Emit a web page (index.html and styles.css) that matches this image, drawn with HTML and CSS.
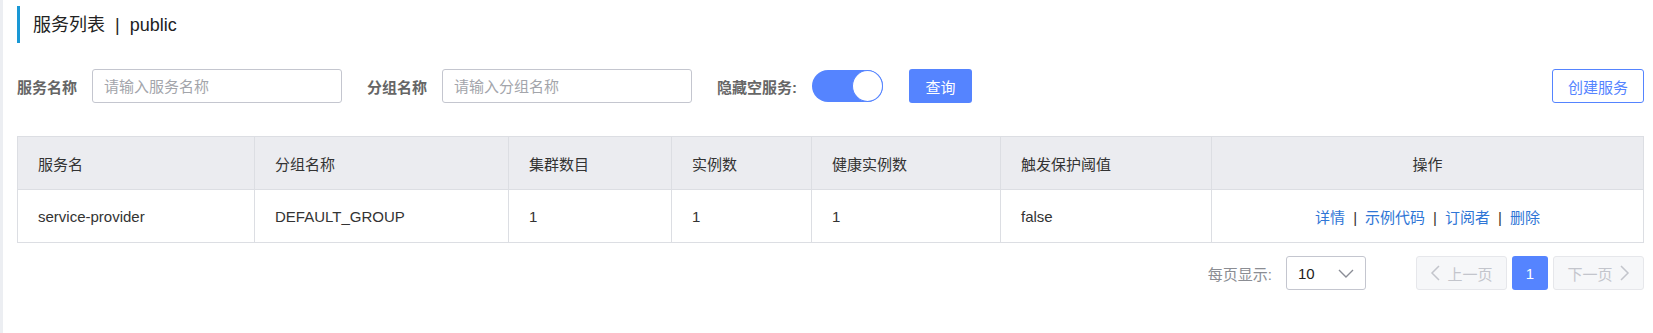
FILE: index.html
```html
<!DOCTYPE html>
<html lang="zh-CN">
<head>
<meta charset="utf-8">
<title>服务列表</title>
<link rel="stylesheet" href="styles.css">
</head>
<body>
<div class="layout">
  <div class="side-edge"></div>
  <main class="main">
    <div class="page-title">
      <span class="title-bar"></span>
      <span class="title-text">服务列表<span class="title-sep">|</span>public</span>
    </div>

    <div class="filter-row">
      <div class="filter-left">
        <div class="form-item">
          <label class="form-label">服务名称</label>
          <input class="text-input" type="text" placeholder="请输入服务名称">
        </div>
        <div class="form-item">
          <label class="form-label">分组名称</label>
          <input class="text-input" type="text" placeholder="请输入分组名称">
        </div>
        <div class="form-item">
          <label class="form-label">隐藏空服务:</label>
          <span class="switch"><span class="switch-knob"></span></span>
        </div>
        <button class="btn btn-primary" type="button">查询</button>
      </div>
      <button class="btn btn-outline" type="button">创建服务</button>
    </div>

    <table class="data-table">
      <colgroup>
        <col class="c1"><col class="c2"><col class="c3"><col class="c4"><col class="c5"><col class="c6"><col class="c7">
      </colgroup>
      <thead>
        <tr>
          <th>服务名</th>
          <th>分组名称</th>
          <th>集群数目</th>
          <th>实例数</th>
          <th>健康实例数</th>
          <th>触发保护阈值</th>
          <th class="center">操作</th>
        </tr>
      </thead>
      <tbody>
        <tr>
          <td>service-provider</td>
          <td>DEFAULT_GROUP</td>
          <td>1</td>
          <td>1</td>
          <td>1</td>
          <td>false</td>
          <td class="center">
            <a class="link">详情</a><span class="sep">|</span><a class="link">示例代码</a><span class="sep">|</span><a class="link">订阅者</a><span class="sep">|</span><a class="link">删除</a>
          </td>
        </tr>
      </tbody>
    </table>

    <div class="pager-row">
      <span class="pager-label">每页显示:</span>
      <div class="select">
        <span class="select-value">10</span>
        <svg class="chev" width="16" height="9" viewBox="0 0 16 9"><path d="M1 1 L8 8 L15 1" fill="none" stroke="#8a8d96" stroke-width="1.4"/></svg>
      </div>
      <div class="pager">
        <button class="pg-btn pg-disabled" type="button"><svg width="10" height="16" viewBox="0 0 10 16"><path d="M9 1 L2 8 L9 15" fill="none" stroke="#c3c5cc" stroke-width="1.5"/></svg>上一页</button>
        <button class="pg-num" type="button">1</button>
        <button class="pg-btn pg-disabled" type="button">下一页<svg width="10" height="16" viewBox="0 0 10 16"><path d="M1 1 L8 8 L1 15" fill="none" stroke="#c3c5cc" stroke-width="1.5"/></svg></button>
      </div>
    </div>
  </main>
</div>
</body>
</html>
```

FILE: styles.css
```css
* { box-sizing: border-box; }
html, body { margin: 0; padding: 0; background: #fff; }
body {
  font-family: "Liberation Sans", "Noto Sans CJK SC", sans-serif;
  font-size: 15px;
  color: #333;
}
.layout { display: flex; min-height: 333px; }
.side-edge { width: 3px; background: #eceef2; flex: none; }
.main { flex: 1; padding: 6px 9px 0 14px; }

.page-title { display: flex; align-items: center; height: 37px; }
.title-bar { width: 3px; height: 37px; background: #1a98d5; flex: none; }
.title-text { margin-left: 13px; font-size: 18px; color: #222; line-height: 1; }
.title-sep { margin: 0 10px; }

.filter-row {
  margin-top: 26px;
  display: flex;
  justify-content: space-between;
  align-items: center;
  height: 34px;
}
.filter-left { display: flex; align-items: center; }
.form-item { display: flex; align-items: center; margin-right: 25px; }
.form-label { font-weight: bold; color: #666; margin-right: 15px; white-space: nowrap; font-size: 15px; }
.text-input {
  width: 250px; height: 34px;
  border: 1px solid #c4c6cf; border-radius: 3px;
  padding: 0 11px;
  font: inherit; font-size: 15px; color: #333;
  outline: none;
}
.text-input::placeholder { color: #a3a5ab; }

.switch {
  width: 71px; height: 32px; border-radius: 16px;
  background: #5584ff;
  display: flex; justify-content: flex-end; align-items: center;
  padding: 0;
}
.switch-knob {
  width: 31px; height: 32px; border-radius: 50%;
  background: #fff; border: 1px solid #5584ff;
}

.btn {
  height: 34px; border-radius: 3px;
  font: inherit; font-size: 15px;
  cursor: pointer;
}
.btn-primary {
  width: 63px; background: #5584ff; color: #fff; border: none;
  margin-left: 1px;
}
.btn-outline {
  width: 92px; background: #fff; color: #5584ff; border: 1px solid #5584ff;
}

.data-table {
  margin-top: 33px;
  width: 100%;
  border-collapse: collapse;
  table-layout: fixed;
  border: 1px solid #dcdee3;
}
.c1 { width: 237px; }
.c2 { width: 254px; }
.c3 { width: 163px; }
.c4 { width: 140px; }
.c5 { width: 189px; }
.c6 { width: 211px; }
.c7 { width: auto; }
.data-table th, .data-table td {
  height: 53px;
  padding: 0 20px;
  text-align: left;
  border: 1px solid #dcdee3;
  font-weight: normal;
  white-space: nowrap;
}
.data-table th { background: #ebecf0; color: #333; }
.data-table td { color: #333; background: #fff; }
.data-table .center { text-align: center; }
.link { color: #2f76d6; cursor: pointer; }
.sep { color: #333; margin: 0 8px; }

.pager-row {
  margin-top: 13px;
  display: flex; justify-content: flex-end; align-items: center;
  height: 34px;
}
.pager-label { color: #8b8d93; margin-right: 14px; }
.select {
  width: 80px; height: 34px;
  border: 1px solid #c4c6cf; border-radius: 3px;
  display: flex; align-items: center; justify-content: space-between;
  padding: 0 11px 0 11px;
  color: #222;
}
.chev { display: block; }
.pager { display: flex; align-items: center; margin-left: 50px; gap: 5px; }
.pg-btn {
  width: 91px; height: 34px;
  border: 1px solid #e6e7eb; border-radius: 3px;
  background: #f6f7f9; color: #c3c5cc;
  font: inherit; font-size: 15px;
  display: flex; align-items: center; justify-content: center; gap: 7px;
  padding: 0;
}
.pg-num {
  width: 36px; height: 34px; border: none; border-radius: 3px;
  background: #5584ff; color: #fff;
  font: inherit; font-size: 15px; padding: 0;
}
```
